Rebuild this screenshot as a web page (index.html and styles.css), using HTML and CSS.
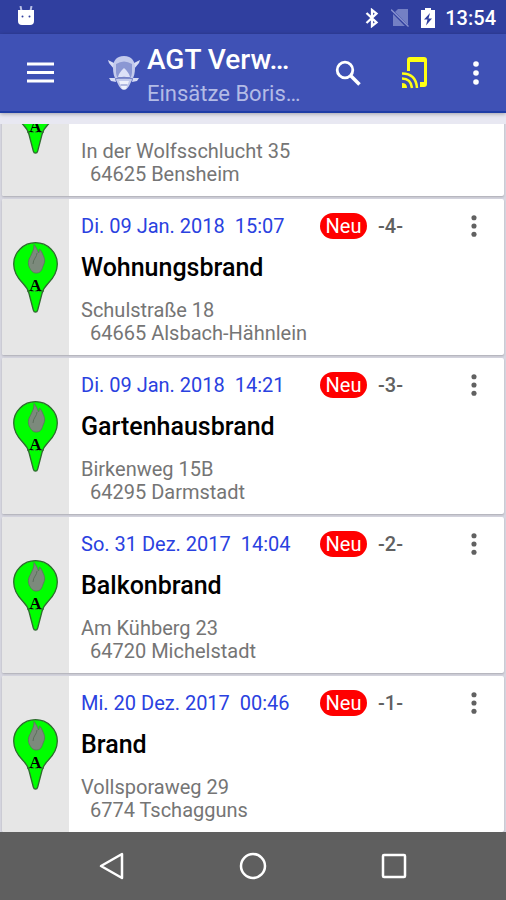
FILE: index.html
```html
<!DOCTYPE html>
<html lang="de">
<head>
    <meta charset="UTF-8">
    <meta name="viewport" content="width=device-width, initial-scale=1.0">
    <title>AGT Verwaltung</title>
    <link rel="stylesheet" href="styles.css">
</head>
<body>
    <!-- Symbole, die mehrfach verwendet werden -->
    <svg class="sprite" width="0" height="0" aria-hidden="true">
        <symbol id="pin" viewBox="0 0 45 71">
            <path d="M22.500 .7C10.500 .7 .7 10.200 .7 22c0 8 3.800 14 9.300 19.500 3 3 5 6 6 10l4.300 16.500c.7 2.800 3.700 2.800 4.400 0L29 51.500c1-4 3-7 6-10C40.500 36 44.300 30 44.300 22 44.300 10.200 34.500 .7 22.500 .7z" fill="#00ff00" stroke="#2f6b2f" stroke-width="1.300"/>
            <path d="M14 49h17" stroke="#2f6b2f" stroke-dasharray="3 1"/>
            <path d="M21 2.500c.5 5-2 8-3.500 12-2.500 4-3 8-.5 12 1.500 3 4 5 7 4.500 5-.5 5-5 6.500-8 2-4 1-7-.5-10-1-3-2.500-5-3.500-6 0 2-.5 3-1 4-1-3-2.500-6-4.500-8.500z" fill="#7c8a7c" stroke="#5d6f5d" stroke-width=".8"/>
            <path d="M24 11c0 4-4 6-4 11" fill="none" stroke="#5d6f5d"/>
            <text x="22.500" y="49" text-anchor="middle" class="pin-letter">A</text>
        </symbol>
        <symbol id="dots" viewBox="0 0 8 24">
            <circle cx="4" cy="3" r="2.800"/>
            <circle cx="4" cy="12" r="2.800"/>
            <circle cx="4" cy="21" r="2.800"/>
        </symbol>
    </svg>

    <div class="status-bar">
        <svg class="status-android" width="18" height="20" viewBox="0 0 18 20">
            <path d="M3.500 0l1 5M14.500 0l-1 5" stroke="#b9c0e6" stroke-width="2"/>
            <path d="M1 4h16v11q0 4-4 4H5q-4 0-4-4z" fill="#fff"/>
            <circle cx="5.500" cy="10.500" r="1" fill="#303f9f"/>
            <circle cx="12.500" cy="10.500" r="1" fill="#303f9f"/>
        </svg>
        <div class="status-icons">
            <svg width="14" height="20" viewBox="0 0 14 20">
                <path d="M1.500 5l10 9.500L7 18V2l4.500 3.500L1.500 15" fill="none" stroke="#fff" stroke-width="2.300"/>
            </svg>
            <svg width="18" height="20" viewBox="0 0 18 20">
                <path d="M7 1h10v17H2V6z" fill="#7480c4"/>
                <path d="M0 2l17 17" stroke="#303f9f" stroke-width="3"/>
                <path d="M0 1.500l17.500 17" stroke="#8a94d0" stroke-width="1.300"/>
            </svg>
            <svg width="14" height="20" viewBox="0 0 14 20">
                <path d="M4 0h6v2h4v18H0V2h4z" fill="#fff"/>
                <path d="M9 5L3 11.500h3.500L5 17.500l6-7H7.500z" fill="#303f9f"/>
            </svg>
        </div>
        <span class="clock">13:54</span>
    </div>

    <header class="app-bar">
        <button type="button" class="icon-btn menu-btn" aria-label="Menü">
            <svg width="27" height="21" viewBox="0 0 27 21">
                <path d="M0 2h27M0 10.500h27M0 19h27" stroke="#fff" stroke-width="3"/>
            </svg>
        </button>
        <svg class="logo" width="34" height="36" viewBox="0 0 34 36">
            <path d="M1 5l6 3v6l-5-6zM33 5l-6 3v6l5-6zM2 23h6l1 4-5-1zM32 23h-6l-1 4 5-1z" fill="#d7dcf5"/>
            <path d="M17 1C9 1 6 6 6 13c0 5 1 9 3 12l3 6q5 8 10 0l3-6c2-3 3-7 3-12 0-7-3-12-11-12z" fill="#c3caec"/>
            <path d="M9 9q8-5 16 0v8q0 5-3 7H12q-3-2-3-7z" fill="#8b97d3"/>
            <path d="M17 13c-3 3-5 5-6 9h12c-1-4-3-6-6-9z" fill="#dde1f7"/>
            <path d="M8 24q9-3 18 0M13 30q4-2 8 0" stroke="#7783c6" fill="none" stroke-width="1.300"/>
            <path d="M12 26h10l-3 8h-4z" fill="#eef0fb"/>
            <path d="M14 30h6" stroke="#7783c6"/>
        </svg>
        <div class="titles">
            <h1>AGT Verw…</h1>
            <p>Einsätze Boris…</p>
        </div>
        <div class="actions">
            <button type="button" class="icon-btn" aria-label="Suchen">
                <svg width="26" height="26" viewBox="0 0 26 26">
                    <circle cx="10" cy="10" r="7.800" fill="none" stroke="#fff" stroke-width="2.800"/>
                    <path d="M15.500 15.500l9 9" stroke="#fff" stroke-width="3.600"/>
                </svg>
            </button>
            <button type="button" class="icon-btn" aria-label="Verbinden">
                <svg width="26" height="33" viewBox="0 0 26 33">
                    <path d="M5 15V4q0-3 3-3h14q3 0 3 3v24q0 3-3 3h-4v-5h4V6H8v9z" fill="#ffff14"/>
                    <path d="M0 17.500q14 0 15 14.500M0 22.500q9 0 10 9.500" fill="none" stroke="#ffff14" stroke-width="2.500"/>
                    <path d="M0 27q5 0 5 5H0z" fill="#ffff14"/>
                </svg>
            </button>
            <button type="button" class="icon-btn" aria-label="Mehr">
                <svg width="8" height="24" fill="#fff"><use href="#dots"/></svg>
            </button>
        </div>
    </header>

    <main class="list">
        <article class="card">
            <div class="card-side"><svg width="45" height="71"><use href="#pin"/></svg></div>
            <div class="card-body">
                <div class="card-head"></div>
                <h2></h2>
                <address>In der Wolfsschlucht 35<span>64625 Bensheim</span></address>
            </div>
        </article>

        <article class="card">
            <div class="card-side"><svg width="45" height="71"><use href="#pin"/></svg></div>
            <div class="card-body">
                <div class="card-head">
                    <span class="date">Di. 09 Jan. 2018  15:07</span>
                    <span class="badge">Neu</span>
                    <span class="number">-4-</span>
                    <button type="button" class="icon-btn" aria-label="Optionen"><svg width="8" height="22" fill="#616161"><use href="#dots"/></svg></button>
                </div>
                <h2>Wohnungsbrand</h2>
                <address>Schulstraße 18<span>64665 Alsbach-Hähnlein</span></address>
            </div>
        </article>

        <article class="card">
            <div class="card-side"><svg width="45" height="71"><use href="#pin"/></svg></div>
            <div class="card-body">
                <div class="card-head">
                    <span class="date">Di. 09 Jan. 2018  14:21</span>
                    <span class="badge">Neu</span>
                    <span class="number">-3-</span>
                    <button type="button" class="icon-btn" aria-label="Optionen"><svg width="8" height="22" fill="#616161"><use href="#dots"/></svg></button>
                </div>
                <h2>Gartenhausbrand</h2>
                <address>Birkenweg 15B<span>64295 Darmstadt</span></address>
            </div>
        </article>

        <article class="card">
            <div class="card-side"><svg width="45" height="71"><use href="#pin"/></svg></div>
            <div class="card-body">
                <div class="card-head">
                    <span class="date">So. 31 Dez. 2017  14:04</span>
                    <span class="badge">Neu</span>
                    <span class="number">-2-</span>
                    <button type="button" class="icon-btn" aria-label="Optionen"><svg width="8" height="22" fill="#616161"><use href="#dots"/></svg></button>
                </div>
                <h2>Balkonbrand</h2>
                <address>Am Kühberg 23<span>64720 Michelstadt</span></address>
            </div>
        </article>

        <article class="card">
            <div class="card-side"><svg width="45" height="71"><use href="#pin"/></svg></div>
            <div class="card-body">
                <div class="card-head">
                    <span class="date">Mi. 20 Dez. 2017  00:46</span>
                    <span class="badge">Neu</span>
                    <span class="number">-1-</span>
                    <button type="button" class="icon-btn" aria-label="Optionen"><svg width="8" height="22" fill="#616161"><use href="#dots"/></svg></button>
                </div>
                <h2>Brand</h2>
                <address>Vollsporaweg 29<span>6774 Tschagguns</span></address>
            </div>
        </article>
    </main>

    <nav class="nav-bar">
        <button type="button" class="icon-btn" aria-label="Zurück">
            <svg width="28" height="28" viewBox="0 0 28 28"><path d="M24 2v24L3 14z" fill="none" stroke="#fff" stroke-width="2.500" stroke-linejoin="round"/></svg>
        </button>
        <button type="button" class="icon-btn" aria-label="Startseite">
            <svg width="28" height="28" viewBox="0 0 28 28"><circle cx="14" cy="14" r="12" fill="none" stroke="#fff" stroke-width="2.500"/></svg>
        </button>
        <button type="button" class="icon-btn" aria-label="Übersicht">
            <svg width="28" height="28" viewBox="0 0 28 28"><rect x="3" y="3" width="22" height="22" rx="1" fill="none" stroke="#fff" stroke-width="2.500"/></svg>
        </button>
    </nav>
</body>
</html>
```
FILE: styles.css
```css
* {
    box-sizing: border-box;
}

body {
    display: flex;
    flex-direction: column;
    height: 100vh;
    margin: 0;
    font-family: Roboto, sans-serif;
    background-color: #e8e8f2;
}

h1, h2, p {
    margin: 0;
}

svg {
    display: block;
    flex: none;
}

.sprite {
    position: absolute;
}

.icon-btn {
    display: flex;
    align-items: center;
    justify-content: center;
    padding: 0;
    border: none;
    background: none;
    cursor: pointer;
}

/* Statusleiste */
.status-bar {
    display: flex;
    flex: none;
    align-items: center;
    height: 34px;
    padding: 2px 10px 0 17px;
    background-color: #303f9f;
    color: #fff;
}

.status-icons {
    display: flex;
    gap: 12px;
    margin-left: auto;
}

.status-android {
    margin-bottom: 4px;
}

.clock {
    margin-left: 10px;
    font-size: 20px;
    font-weight: 500;
}

/* Kopfzeile */
.app-bar {
    display: flex;
    flex: none;
    align-items: center;
    height: 79px;
    padding: 0 12px 0 20px;
    border-bottom: 2px solid #1f3da6;
    background-color: #3f51b5;
    box-shadow: 0 1px 4px rgba(0, 0, 0, 0.3);
    color: #fff;
}

.menu-btn {
    width: 40px;
    height: 40px;
}

.logo {
    margin-left: 47px;
}

.titles {
    margin-left: 6px;
    padding-top: 8px;
    white-space: nowrap;
}

.titles h1 {
    font-size: 28px;
    font-weight: 500;
    line-height: 34px;
}

.titles p {
    color: #b3bbe6;
    font-size: 22px;
    line-height: 34px;
}

.actions {
    display: flex;
    gap: 19px;
    margin-left: auto;
}

.actions .icon-btn {
    width: 48px;
    height: 48px;
}

.actions .icon-btn:last-child {
    width: 36px;
}

/* Einsatzliste */
.list {
    display: flex;
    flex: 1;
    flex-direction: column;
    justify-content: flex-end;
    gap: 3px;
    min-height: 0;
    margin-top: 11px;
    padding: 0 2px;
    background-color: #d6d6e0;
    overflow: hidden;
}

.card {
    display: flex;
    flex: none;
    border-radius: 2px;
    background-color: #fff;
    box-shadow: 0 1px 2px rgba(0, 0, 0, 0.2);
    overflow: hidden;
}

.card-side {
    display: flex;
    align-items: center;
    justify-content: center;
    width: 67px;
    background-color: #e6e6e6;
}

.card-body {
    flex: 1;
    padding: 14px 16px 10px 12px;
}

.card-head {
    display: flex;
    align-items: center;
    height: 26px;
    font-size: 20px;
}

.date {
    width: 239px;
    color: #2a41e0;
    white-space: pre;
}

.badge {
    width: 47px;
    border-radius: 13px;
    background-color: #ff0000;
    color: #fff;
    line-height: 26px;
    text-align: center;
}

.number {
    margin-left: 11px;
    color: #616161;
    font-weight: 500;
}

.card-head .icon-btn {
    width: 28px;
    height: 26px;
    margin-left: auto;
}

.card h2 {
    height: 32px;
    margin-top: 13px;
    font-size: 25px;
    font-weight: 500;
    line-height: 32px;
}

address {
    margin-top: 15px;
    color: #757575;
    font-size: 20px;
    font-style: normal;
    line-height: 23px;
}

address span {
    display: block;
    padding-left: 9px;
}

.pin-letter {
    font-family: "Liberation Serif", serif;
    font-size: 17px;
    font-weight: bold;
}

/* Navigationsleiste */
.nav-bar {
    display: flex;
    flex: none;
    align-items: center;
    justify-content: center;
    gap: 93px;
    height: 68px;
    background-color: #5f5f5f;
}

.nav-bar .icon-btn {
    width: 48px;
    height: 48px;
}
```
